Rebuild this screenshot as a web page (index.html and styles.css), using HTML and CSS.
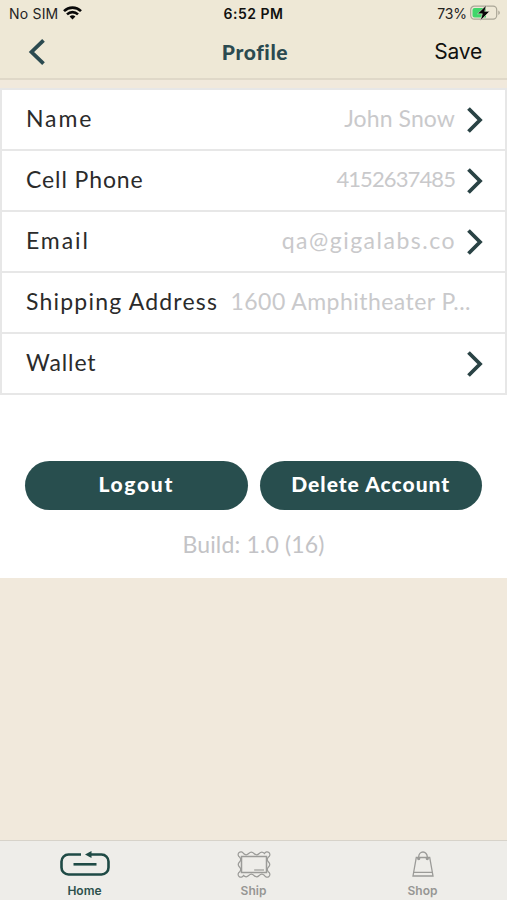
FILE: index.html
```
<!DOCTYPE html>
<html lang="en">
<head>
    <meta charset="UTF-8">
    <meta name="viewport" content="width=device-width, initial-scale=1.0">
    <title>Profile</title>
    <link rel="stylesheet" href="styles.css">
</head>
<body>
    <div class="screen">
        <header class="header">
            <div class="status-bar">
                <div class="carrier">
                    <span>No SIM</span>
                    <svg class="wifi" width="19" height="14" viewBox="0 0 19 14" fill="none" stroke="#080808" stroke-width="2.6">
                        <path d="M1 5.1C5.8.4 13.2.4 18 5.1"/>
                        <path d="M4 8.4c3.2-3 7.8-3 11 0"/>
                        <path d="M6.6 10.4c1.7-1.5 4.1-1.5 5.8 0L9.5 13.5z" fill="#080808" stroke="none"/>
                    </svg>
                </div>
                <span class="clock">6:52 PM</span>
                <div class="power">
                    <span>73%</span>
                    <svg width="31" height="16" viewBox="0 0 31 16">
                        <rect x=".7" y="1.2" width="26" height="13" rx="3.6" fill="none" stroke="#aaa697" stroke-width="1.2"/>
                        <path d="M4.5 3h11.5v9.500h-11.500A2 2 0 0 1 2.500 10.500V5a2 2 0 0 1 2-2z" fill="#41d66b"/>
                        <path d="M28.300 5.500c2 .8 2 3.700 0 4.500z" fill="#aaa697"/>
                        <path d="M16.500 0 7.500 8.800h4.800L10.300 15.800l9.400-9.500h-5z" fill="#080808" stroke="#eee8d6" stroke-width=".6"/>
                    </svg>
                </div>
            </div>
            <nav class="nav-bar">
                <svg class="back" width="18" height="28" viewBox="0 0 18 28" fill="none" stroke="#2b4a50" stroke-width="3.8">
                    <path d="M15.5 2.3 3.5 14l12 11.700"/>
                </svg>
                <h1>Profile</h1>
                <span class="save">Save</span>
            </nav>
        </header>

        <main class="profile">
            <ul class="fields">
                <li class="field">
                    <span class="label name">Name</span>
                    <span class="value john">John Snow</span>
                    <svg class="chevron" viewBox="0 0 16 26"><path d="M1.5 1.5 13 13 1.500 24.500"/></svg>
                </li>
                <li class="field">
                    <span class="label phone">Cell Phone</span>
                    <span class="value number">4152637485</span>
                    <svg class="chevron" viewBox="0 0 16 26"><path d="M1.5 1.5 13 13 1.500 24.500"/></svg>
                </li>
                <li class="field">
                    <span class="label email">Email</span>
                    <span class="value mail">qa@gigalabs.co</span>
                    <svg class="chevron" viewBox="0 0 16 26"><path d="M1.5 1.5 13 13 1.500 24.500"/></svg>
                </li>
                <li class="field">
                    <span class="label shipping">Shipping Address</span>
                    <span class="value address">1600 Amphitheater P...</span>
                </li>
                <li class="field">
                    <span class="label wallet">Wallet</span>
                    <svg class="chevron" viewBox="0 0 16 26"><path d="M1.5 1.5 13 13 1.500 24.500"/></svg>
                </li>
            </ul>
            <div class="actions">
                <button class="logout">Logout</button>
                <button class="delete">Delete Account</button>
            </div>
            <p class="build">Build: 1.0 (16)</p>
        </main>

        <footer class="tab-bar">
            <div class="tab active">
                <svg width="50" height="26" viewBox="0 0 50 26" fill="none" stroke="#1f4a45" stroke-width="2.6">
                    <path d="M21 3.500H8.500a7 7 0 0 0-7 7v6a7 7 0 0 0 7 7h33a7 7 0 0 0 7-7v-6a7 7 0 0 0-7-7H29"/>
                    <path d="M13.500 13.300h23"/>
                    <path d="M25 3.500 31.500 0v7z" fill="#1f4a45" stroke="none"/>
                </svg>
                <span>Home</span>
            </div>
            <div class="tab">
                <svg width="36" height="27" viewBox="0 0 36 27" fill="none" stroke="#9b9b98" stroke-width="1.2">
                    <path d="M3.500 6A2.800 2.800 0 1 1 7.500 2.500q2.600 2.600 5.200 0 2.600-2.600 5.300 0 2.600 2.600 5.200 0 2.600-2.600 5.300 0A2.800 2.800 0 1 1 32.500 6q-2.500 2.500 0 5 2.500 2.500 0 5-2.500 2.500 0 5A2.800 2.800 0 1 1 28.500 24.500q-2.600-2.600-5.300 0-2.600 2.600-5.200 0-2.600-2.600-5.300 0-2.600 2.600-5.200 0A2.800 2.800 0 1 1 3.500 21q2.500-2.500 0-5-2.500-2.500 0-5 2.500-2.500 0-5z"/>
                    <rect x="5.500" y="5.500" width="25" height="16" stroke-width="1.500"/>
                    <path d="M18 19h10"/>
                </svg>
                <span>Ship</span>
            </div>
            <div class="tab">
                <svg width="22" height="26" viewBox="0 0 22 26" fill="none" stroke="#9b9b98" stroke-width="1.300">
                    <path d="M4.300 6.500h13.400L21 25H1z"/>
                    <path d="M1.600 21.300h18.800M6.700 8.500V6a4.300 5 0 0 1 8.600 0v2.500"/>
                    <circle cx="6.700" cy="7.500" r="1"/>
                    <circle cx="15.300" cy="7.500" r="1"/>
                </svg>
                <span>Shop</span>
            </div>
        </footer>
    </div>
</body>
</html>
```
FILE: styles.css
```
* {
    box-sizing: border-box;
}

body {
    margin: 0;
    background: #f1e9dc;
    font-family: Lato, "Liberation Sans", sans-serif;
}

.screen {
    display: flex;
    flex-direction: column;
    height: 900px;
}

.header {
    height: 80px;
    background: #eee8d6;
    border-bottom: 2px solid #dfd8c8;
}

.status-bar {
    display: grid;
    grid-template-columns: 1fr auto 1fr;
    align-items: center;
    height: 26px;
    padding: 0 6px 0 9px;
    font: 14px Inter, sans-serif;
    color: #24231f;
}

.carrier,
.power {
    display: flex;
    align-items: center;
    gap: 5px;
}

.carrier span {
    letter-spacing: 0.2px;
}

.power {
    justify-content: flex-end;
    gap: 3px;
    letter-spacing: -0.1px;
}

.clock {
    font-weight: 600;
    letter-spacing: 0.5px;
    color: #11110f;
    margin-right: 3px;
}

.nav-bar {
    display: grid;
    grid-template-columns: 1fr auto 1fr;
    align-items: center;
    height: 51px;
    padding: 0 25px 0 28px;
}

.nav-bar h1 {
    margin: 0;
    font-size: 21px;
    font-weight: 900;
    letter-spacing: 0.6px;
    color: #2b4a50;
}

.save {
    justify-self: end;
    font: 21px Inter, sans-serif;
    letter-spacing: -0.2px;
    color: #11110f;
}

.profile {
    height: 490px;
    margin-top: 8px;
    background: #fff;
}

.fields {
    margin: 0;
    padding: 0;
    list-style: none;
    border: 2px solid #e7e7e7;
    border-top: 0;
}

.field {
    display: flex;
    align-items: center;
    height: 61px;
    padding: 0 22px 0 24px;
    border-top: 2px solid #e7e7e7;
    font-size: 23px;
    white-space: nowrap;
}

.label,
.value {
    padding-bottom: 4px;
}

.label {
    color: #2b2b2b;
}

.value {
    margin-left: auto;
    color: #c9c9cb;
}

.name {
    letter-spacing: 1.9px;
}

.phone {
    letter-spacing: 0.9px;
}

.email {
    letter-spacing: 1.9px;
}

.shipping {
    letter-spacing: 1.2px;
}

.wallet {
    letter-spacing: 0.9px;
}

.john {
    letter-spacing: 0.1px;
}

.number {
    font-size: 22px;
    letter-spacing: -0.9px;
}

.mail {
    letter-spacing: 1.5px;
    margin-right: -1px;
}

.address {
    letter-spacing: 0.45px;
    margin-right: 12px;
}

.chevron {
    width: 16px;
    height: 26px;
    margin-left: 12px;
    fill: none;
    stroke: #2a4345;
    stroke-width: 3.8;
}

.wallet + .chevron {
    margin-left: auto;
}

.actions {
    display: grid;
    grid-template-columns: 1fr 1fr;
    gap: 12px;
    margin: 66px 25px 0;
}

.actions button {
    height: 49px;
    padding: 0 0 5px;
    border: 0;
    border-radius: 25px;
    background: #284e4e;
    color: #fff;
    font: 900 21px Lato, sans-serif;
}

.actions .logout {
    letter-spacing: 1.7px;
}

.actions .delete {
    letter-spacing: 1px;
}

.build {
    margin: 20px 0 0;
    text-align: center;
    font-size: 23px;
    letter-spacing: 0.15px;
    color: #c3c3c6;
}

.tab-bar {
    display: grid;
    grid-template-columns: repeat(3, 1fr);
    height: 60px;
    margin-top: auto;
    border-top: 1px solid #d7d3ca;
    background: #eeede9;
}

.tab {
    display: flex;
    flex-direction: column;
    align-items: center;
    padding-top: 10px;
    font: 600 12px Inter, sans-serif;
    color: #969694;
}

.tab span {
    margin-top: auto;
    padding-bottom: 2px;
}

.active {
    color: #2d514c;
}
```
